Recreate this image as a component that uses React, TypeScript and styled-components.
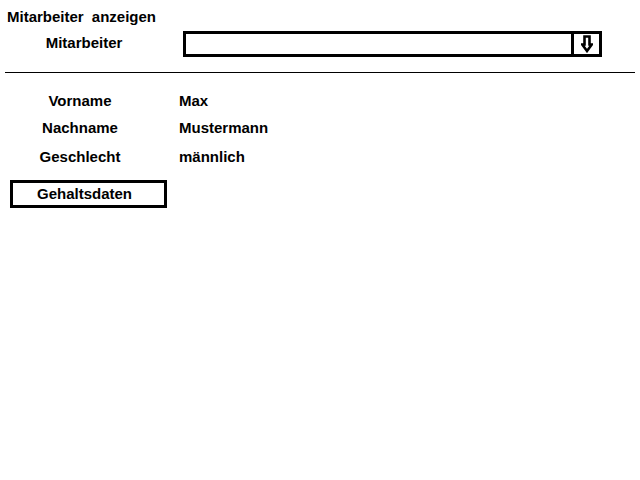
import React from "react";
import styled, { createGlobalStyle } from "styled-components";

const GlobalStyle = createGlobalStyle`
  html, body {
    margin: 0;
    padding: 0;
    background: #ffffff;
  }
  body {
    font-family: "Liberation Sans", Arial, sans-serif;
    font-weight: bold;
    font-size: 15px;
    color: #000000;
  }
`;

const fields = [
  { label: "Vorname", value: "Max" },
  { label: "Nachname", value: "Mustermann" },
  { label: "Geschlecht", value: "männlich" },
];

const DownArrow = () => (
  <svg width="12" height="18" viewBox="0 0 12 18">
    <path
      d="M3.5 1.5 H8.5 V9.5 H10.8 L6 16 L1.2 9.5 H3.5 Z"
      fill="#fff"
      stroke="#000"
      strokeWidth="2.6"
      strokeLinejoin="miter"
    />
  </svg>
);

const App = () => {
  return (
    <Page>
      <GlobalStyle />
      <Title>Mitarbeiter anzeigen</Title>
      <SelectRow>
        <SelectLabel>Mitarbeiter</SelectLabel>
        <Combo>
          <ComboField />
          <ComboButton>
            <DownArrow />
          </ComboButton>
        </Combo>
      </SelectRow>
      <Rule />
      <Fields>
        {fields.map((f) => (
          <React.Fragment key={f.label}>
            <FieldLabel>{f.label}</FieldLabel>
            <FieldValue>{f.value}</FieldValue>
          </React.Fragment>
        ))}
      </Fields>
      <Button>Gehaltsdaten</Button>
    </Page>
  );
};

export default App;

const Page = styled.div`
  width: 640px;
  height: 480px;
  display: flex;
  flex-direction: column;
  align-items: flex-start;
  box-sizing: border-box;
  padding-top: 8px;
`;

const Title = styled.div`
  padding-left: 7px;
  line-height: 17px;
  word-spacing: 4px;
`;

const SelectRow = styled.div`
  display: flex;
  align-items: flex-start;
  margin-top: 6px;
`;

const SelectLabel = styled.div`
  width: 168px;
  text-align: center;
  line-height: 17px;
  margin-top: 3px;
`;

const Combo = styled.div`
  margin-left: 15px;
  width: 419px;
  height: 26px;
  box-sizing: border-box;
  border: 3px solid #000;
  display: flex;
`;

const ComboField = styled.div`
  flex: 1;
`;

const ComboButton = styled.div`
  width: 25px;
  border-left: 3px solid #000;
  display: flex;
  align-items: center;
  justify-content: center;
`;

const Rule = styled.div`
  align-self: stretch;
  margin: 15px 5px 0 5px;
  height: 1px;
  background: #000;
`;

const Fields = styled.div`
  display: grid;
  grid-template-columns: 160px auto;
  grid-template-rows: 27px 29px 28px;
  column-gap: 19px;
  margin-top: 14px;
  line-height: 28px;
`;

const FieldLabel = styled.div`
  text-align: center;
`;

const FieldValue = styled.div``;

const Button = styled.div`
  margin: 9px 0 0 10px;
  width: 157px;
  height: 28px;
  box-sizing: border-box;
  border: 3px solid #000;
  line-height: 22px;
  text-align: center;
  padding-right: 8px;
`;
